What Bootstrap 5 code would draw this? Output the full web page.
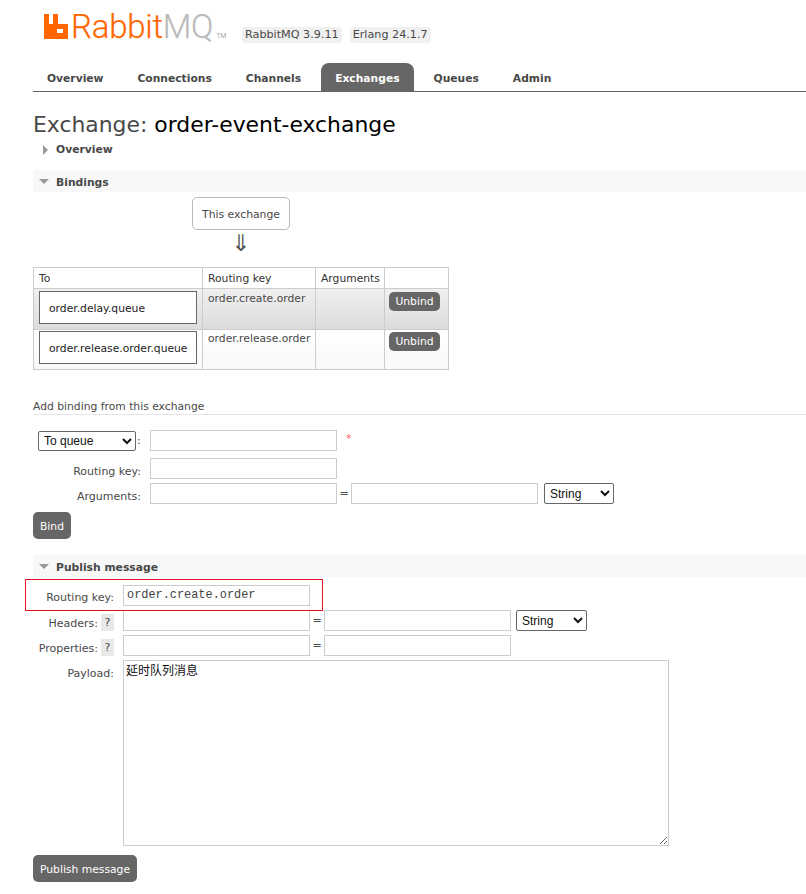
<!DOCTYPE html>
<html lang="en">
<head>
<meta charset="utf-8">
<title>RabbitMQ Management</title>
<link rel="stylesheet" href="https://cdn.jsdelivr.net/npm/bootstrap@5.3.0/dist/css/bootstrap.min.css">
<style>
html,body{overflow:hidden}
body{font-family:"DejaVu Sans",sans-serif;font-size:11px;line-height:1.2;color:#484848;background:#fff;width:806px;height:894px}
.rmq-page{padding-left:33px}
.rmq-head{height:63px;padding:14px 0 0 11px}
.rmq-brand{width:198px}
.rmq-logo-icon{width:24px;height:25px;flex:none;display:block}
.rmq-word{font-family:Roboto,"Liberation Sans",sans-serif;font-weight:300;font-size:33px;line-height:25px;color:#f60;margin-left:3px;letter-spacing:-.25px;white-space:nowrap;-webkit-text-stroke:.25px currentColor}
.rmq-word i{font-style:normal;color:#bbb}
.rmq-word sup{font-size:7px;color:#aaa;top:auto;vertical-align:baseline;margin-left:3px;font-weight:400;line-height:1;-webkit-text-stroke:0}
.rmq-ver{background:#f0f0f0;border-radius:4px;padding:1px 3px;font-size:11.2px;line-height:14px;height:16px;color:#484848;margin-top:13px}
.rmq-tabs{border-bottom:1px solid #666;height:29px}
.rmq-tabs a{display:block;height:28px;padding:0 14px;margin-right:6px;font-weight:700;font-size:10.72px;line-height:31px;color:#484848;text-decoration:none;border-radius:8px 8px 0 0}
.rmq-tabs a.on{background:#666;color:#fff}
.rmq-title{font-size:21.9px;font-weight:400;line-height:26px;margin:20px 0 0 0;color:#484848}
.rmq-title b{font-weight:400;color:#000}
.rmq-sec{height:22px;font-weight:700;font-size:10.75px;padding-left:23px;position:relative;line-height:24px;color:#484848}
.rmq-sec.grey{background:#f8f8f8;line-height:25px}
.rmq-sec.plain{height:32px}
.rmq-sec.pub-bar{margin-top:16px}
.rmq-tri{position:absolute;width:0;height:0}
.rmq-tri.d{left:6px;top:9px;border-left:5px solid transparent;border-right:5px solid transparent;border-top:5px solid #999}
.rmq-tri.r{left:10px;top:7px;border-top:5px solid transparent;border-bottom:5px solid transparent;border-left:5px solid #999}
.rmq-this{width:98px;height:33px;margin:5px 0 0 159px;border:1px solid #bbb;border-radius:5px;line-height:33px;text-align:center;font-size:10.8px}
.rmq-arrow{width:98px;margin-left:159px;text-align:center;font-size:23px;line-height:20px;height:37px;padding-top:3px;color:#555}
.rmq-tbl{width:415px;table-layout:fixed;border-collapse:collapse;margin:0;font-size:10.75px;color:#484848}
.rmq-tbl col.c1{width:169px}.rmq-tbl col.c2{width:113px}.rmq-tbl col.c3{width:69px}.rmq-tbl col.c4{width:64px}
.rmq-tbl th,.rmq-tbl td{border:1px solid #ccc;padding:4px 4px 2px 5px;font-weight:400;vertical-align:top;background:transparent;box-shadow:none;color:#484848}
.rmq-tbl thead th{height:21px;color:#333;padding-top:5px;padding-bottom:1px}
.rmq-tbl tbody tr.a{height:41px;background:linear-gradient(#f0f0f0,#dcdcdc)}
.rmq-tbl tbody tr.b{height:40px;background:linear-gradient(#fff,#f8f8f8)}
.rmq-tbl tbody tr.b td{padding-top:3px}
.rmq-tbl td.q{padding:2px 5px 1px}
.rmq-tbl tbody tr.b td.q{padding-top:1px}
.rmq-tbl td.u{padding:3px 4px 1px}
.rmq-tbl tbody tr.b td.u{padding-top:2px}
.rmq-node{border:1px solid #666;background:#fff;height:33px;line-height:33px;padding-left:9px;color:#222;white-space:nowrap}
.rmq-btn{background:#666;color:#fff;border:0;border-radius:5px;font-family:"DejaVu Sans",sans-serif;font-size:10.75px;padding:1px 0 0;line-height:1;display:block;text-align:center}
.rmq-btn:hover,.rmq-btn:focus{background:#666;color:#fff}
.rmq-btn.sm{width:51px;height:19px}
.rmq-btn.bind{width:38px;height:27px;margin-top:8px;padding-top:3px}
.rmq-btn.pub{width:104px;height:27px;margin-top:9px;padding-top:3px}
.rmq-sub{margin-top:30px;height:15px;border-bottom:1px solid #e5e5e5;font-size:10.75px;line-height:14px;color:#484848}
.rmq-inp{width:187px;height:21px;border:1px solid #ccc;background:#fff;border-radius:0;padding:1px 3px;display:block;flex:none;font-size:12px;outline:0}
.rmq-mono{font-family:"Liberation Mono",monospace;font-size:11.9px;color:#444;padding:0 3px 2px}
.rmq-sel{font-family:"Liberation Sans",sans-serif;font-size:12px;color:#111;border:1px solid #666;border-radius:2px;background:#fff;height:20px;padding:0 0 0 1px;flex:none}
.rmq-sel.to{width:98px;margin-top:1px}
.rmq-sel.s1{width:70px;height:21px;margin-left:6px}
.rmq-sel.s2{width:71px;height:21px;margin-left:5px}
.rmq-lab{text-align:right;flex:none;line-height:26px;font-size:11px;color:#484848}
.rmq-row{display:flex;align-items:flex-start;height:21px;margin-top:4px}
.rmq-row.first{margin:15px 0 0 5px}
.rmq-row.second{margin-top:7px}
.rmq-row.red-row{margin-top:8px;position:relative}
.rmq-row.tall{height:auto}
.rmq-colon{width:14px;line-height:21px;padding-left:1px}
.rmq-eq{width:14px;text-align:center;flex:none;line-height:21px}
.rmq-lab.w1{width:108px;margin-right:9px;line-height:27px}
.rmq-lab.w2{width:81px;margin-right:9px}
.rmq-help{width:13px;height:17px;background:#e8e8e8;color:#484848;text-align:center;line-height:17px;font-size:11px;flex:none;margin:4px 9px 0 3px}
.rmq-lab.w3{width:65px;line-height:27px}
.rmq-lab.pay{line-height:27px}
.rmq-pay{width:546px;height:186px;resize:both;font-family:"Liberation Sans","Noto Sans CJK SC",sans-serif;font-size:12px;color:#111;padding:2px 2px;border:1px solid #ccc;border-radius:0;display:block;flex:none;outline:0;line-height:17px}
.rmq-red{position:absolute;left:-8px;top:-6px;width:298px;height:32px;border:1px solid #e81123;pointer-events:none}
.rmq-star{color:#f66;font-size:11px;margin-left:9px;line-height:17px}
</style>
</head>
<body>
<div class="rmq-page">
  <header class="rmq-head d-flex">
    <div class="d-flex rmq-brand">
      <svg class="rmq-logo-icon" viewBox="0 0 24 25" aria-hidden="true"><path fill="#f60" fill-rule="evenodd" d="M0 0h5v10h4V0h5v10h10v15H0zM13 15v4h6v-4z"/></svg>
      <span class="rmq-word">Rabbit<i>MQ</i><sup>TM</sup></span>
    </div>
    <span class="rmq-ver">RabbitMQ 3.9.11</span>
    <span class="rmq-ver ms-2">Erlang 24.1.7</span>
  </header>
  <nav class="rmq-tabs d-flex">
    <a href="#">Overview</a>
    <a href="#">Connections</a>
    <a href="#">Channels</a>
    <a href="#" class="on">Exchanges</a>
    <a href="#">Queues</a>
    <a href="#">Admin</a>
  </nav>
  <h1 class="rmq-title">Exchange: <b>order-event-exchange</b></h1>
  <div class="rmq-sec plain"><span class="rmq-tri r"></span>Overview</div>
  <div class="rmq-sec grey"><span class="rmq-tri d"></span>Bindings</div>
  <div class="rmq-this">This exchange</div>
  <div class="rmq-arrow">⇓</div>
  <table class="table rmq-tbl">
    <colgroup><col class="c1"><col class="c2"><col class="c3"><col class="c4"></colgroup>
    <thead><tr><th>To</th><th>Routing key</th><th>Arguments</th><th></th></tr></thead>
    <tbody>
      <tr class="a"><td class="q"><div class="rmq-node">order.delay.queue</div></td><td>order.create.order</td><td></td><td class="u"><button class="btn rmq-btn sm">Unbind</button></td></tr>
      <tr class="b"><td class="q"><div class="rmq-node">order.release.order.queue</div></td><td>order.release.order</td><td></td><td class="u"><button class="btn rmq-btn sm">Unbind</button></td></tr>
    </tbody>
  </table>
  <div class="rmq-sub">Add binding from this exchange</div>
  <div class="rmq-row first">
    <select class="rmq-sel to"><option>To queue</option></select>
    <span class="rmq-colon">:</span>
    <input class="rmq-inp" type="text">
    <span class="rmq-star">*</span>
  </div>
  <div class="rmq-row second">
    <span class="rmq-lab w1">Routing key:</span><input class="rmq-inp" type="text">
  </div>
  <div class="rmq-row">
    <span class="rmq-lab w1">Arguments:</span><input class="rmq-inp" type="text"><span class="rmq-eq">=</span><input class="rmq-inp" type="text">
    <select class="rmq-sel s1"><option>String</option></select>
  </div>
  <button class="btn rmq-btn bind">Bind</button>
  <div class="rmq-sec grey pub-bar"><span class="rmq-tri d"></span>Publish message</div>
  <div class="rmq-row red-row">
    <span class="rmq-lab w2">Routing key:</span><input class="rmq-inp rmq-mono" type="text" value="order.create.order">
    <span class="rmq-red"></span>
  </div>
  <div class="rmq-row">
    <span class="rmq-lab w3">Headers:</span><span class="rmq-help">?</span><input class="rmq-inp" type="text"><span class="rmq-eq">=</span><input class="rmq-inp" type="text">
    <select class="rmq-sel s2"><option>String</option></select>
  </div>
  <div class="rmq-row">
    <span class="rmq-lab w3">Properties:</span><span class="rmq-help">?</span><input class="rmq-inp" type="text"><span class="rmq-eq">=</span><input class="rmq-inp" type="text">
  </div>
  <div class="rmq-row tall">
    <span class="rmq-lab w2 pay">Payload:</span><textarea class="rmq-pay">延时队列消息</textarea>
  </div>
  <button class="btn rmq-btn pub">Publish message</button>
</div>
<script src="https://cdn.jsdelivr.net/npm/bootstrap@5.3.0/dist/js/bootstrap.bundle.min.js"></script>
</body>
</html>
